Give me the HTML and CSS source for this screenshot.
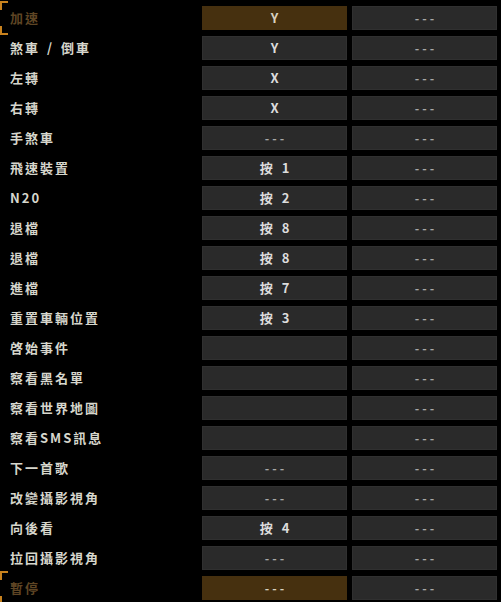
FILE: index.html
```html
<!DOCTYPE html>
<html>
<head>
<meta charset="utf-8">
<link rel="stylesheet" href="styles.css">
</head>
<body>
<div class="list">
  <div class="row sel"><div class="label">加速</div><div class="cell">Y</div><div class="cell dash">---</div></div>
  <div class="row"><div class="label">煞車 / 倒車</div><div class="cell">Y</div><div class="cell dash">---</div></div>
  <div class="row"><div class="label">左轉</div><div class="cell">X</div><div class="cell dash">---</div></div>
  <div class="row"><div class="label">右轉</div><div class="cell">X</div><div class="cell dash">---</div></div>
  <div class="row"><div class="label">手煞車</div><div class="cell dash">---</div><div class="cell dash">---</div></div>
  <div class="row"><div class="label">飛速裝置</div><div class="cell">按 1</div><div class="cell dash">---</div></div>
  <div class="row"><div class="label">N20</div><div class="cell">按 2</div><div class="cell dash">---</div></div>
  <div class="row"><div class="label">退檔</div><div class="cell">按 8</div><div class="cell dash">---</div></div>
  <div class="row"><div class="label">退檔</div><div class="cell">按 8</div><div class="cell dash">---</div></div>
  <div class="row"><div class="label">進檔</div><div class="cell">按 7</div><div class="cell dash">---</div></div>
  <div class="row"><div class="label">重置車輛位置</div><div class="cell">按 3</div><div class="cell dash">---</div></div>
  <div class="row"><div class="label">啓始事件</div><div class="cell"></div><div class="cell dash">---</div></div>
  <div class="row"><div class="label">察看黑名單</div><div class="cell"></div><div class="cell dash">---</div></div>
  <div class="row"><div class="label">察看世界地圖</div><div class="cell"></div><div class="cell dash">---</div></div>
  <div class="row"><div class="label">察看SMS訊息</div><div class="cell"></div><div class="cell dash">---</div></div>
  <div class="row"><div class="label">下一首歌</div><div class="cell dash">---</div><div class="cell dash">---</div></div>
  <div class="row"><div class="label">改變攝影視角</div><div class="cell dash">---</div><div class="cell dash">---</div></div>
  <div class="row"><div class="label">向後看</div><div class="cell">按 4</div><div class="cell dash">---</div></div>
  <div class="row"><div class="label">拉回攝影視角</div><div class="cell dash">---</div><div class="cell dash">---</div></div>
  <div class="row sel"><div class="label">暫停</div><div class="cell dash">---</div><div class="cell dash">---</div></div>
</div>
</body>
</html>
```
FILE: styles.css
```css
html, body {
  margin: 0;
  padding: 0;
  background: #000;
  width: 501px;
  height: 602px;
  overflow: hidden;
}
.list {
  display: flex;
  flex-direction: column;
  gap: 6px;
  padding-top: 6px;
  font-family: "Noto Sans CJK TC", "Noto Sans", sans-serif;
}
.row {
  position: relative;
  display: grid;
  grid-template-columns: 197px 145px 145px;
  column-gap: 5px;
  height: 24px;
}
.label {
  padding-left: 10px;
  color: #d6d6cc;
  font-size: 13px;
  font-weight: 700;
  line-height: 24px;
  letter-spacing: 2px;
  word-spacing: 2px;
  white-space: nowrap;
}
.cell {
  background: #2a2a2a;
  color: #dcdcdc;
  font-size: 13px;
  font-weight: 700;
  line-height: 24px;
  text-align: center;
  word-spacing: 6px;
  box-shadow: inset 0 0 0 1px #303030;
}
.cell.dash {
  color: #a8a8a8;
  font-size: 12px;
  letter-spacing: 3px;
  text-indent: 3px;
}
.row.sel .label {
  color: #5e4524;
}
.row.sel .cell:nth-child(2) {
  background: #46300f;
  box-shadow: none;
  color: #d8d0c0;
}
.row.sel::before,
.row.sel::after {
  content: "";
  position: absolute;
  left: 0;
  width: 6px;
  height: 7px;
  border-left: 2px solid #c8821e;
}
.row.sel::before {
  top: -5px;
  border-top: 2px solid #c8821e;
}
.row.sel::after {
  bottom: -5px;
  border-bottom: 2px solid #c8821e;
}
```
